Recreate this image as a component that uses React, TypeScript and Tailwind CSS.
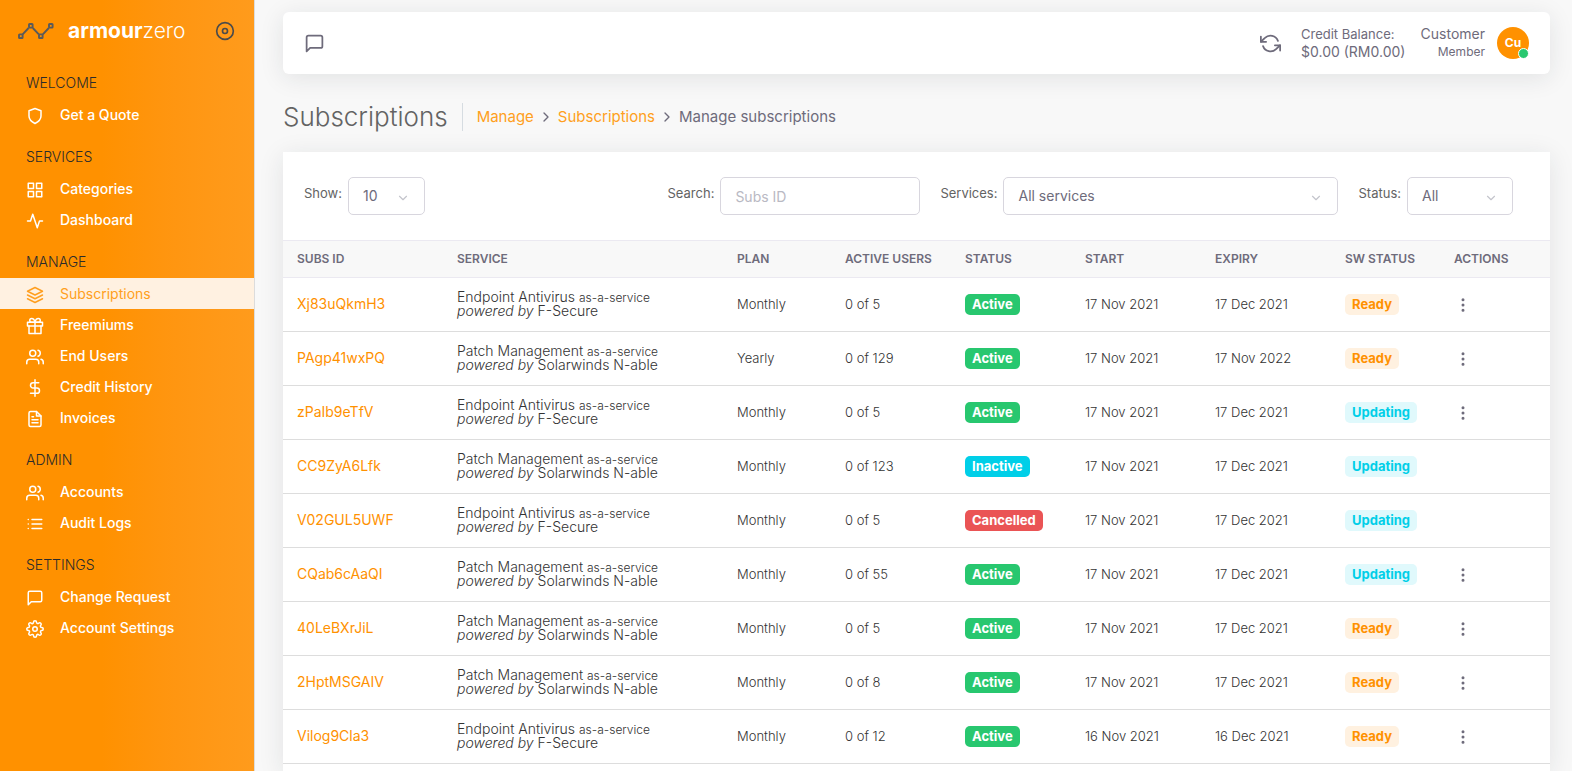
import { useState } from "react";
import type { ReactNode } from "react";
import type { IconType } from "react-icons";
import {
	FiActivity,
	FiChevronDown,
	FiChevronRight,
	FiDisc,
	FiDollarSign,
	FiFileText,
	FiGift,
	FiGrid,
	FiLayers,
	FiList,
	FiMessageSquare,
	FiMoreVertical,
	FiRefreshCcw,
	FiSettings,
	FiShield,
	FiUsers,
} from "react-icons/fi";

interface NavItem {
	label: string;
	icon: IconType;
}

interface NavGroup {
	title: string;
	items: NavItem[];
}

interface Subscription {
	id: string;
	service: string;
	vendor: string;
	plan: string;
	users: string;
	status: string;
	start: string;
	expiry: string;
	swStatus: string;
	hasActions: boolean;
}

const NAV_GROUPS: NavGroup[] = [
	{ title: "WELCOME", items: [{ label: "Get a Quote", icon: FiShield }] },
	{
		title: "SERVICES",
		items: [
			{ label: "Categories", icon: FiGrid },
			{ label: "Dashboard", icon: FiActivity },
		],
	},
	{
		title: "MANAGE",
		items: [
			{ label: "Subscriptions", icon: FiLayers },
			{ label: "Freemiums", icon: FiGift },
			{ label: "End Users", icon: FiUsers },
			{ label: "Credit History", icon: FiDollarSign },
			{ label: "Invoices", icon: FiFileText },
		],
	},
	{
		title: "ADMIN",
		items: [
			{ label: "Accounts", icon: FiUsers },
			{ label: "Audit Logs", icon: FiList },
		],
	},
	{
		title: "SETTINGS",
		items: [
			{ label: "Change Request", icon: FiMessageSquare },
			{ label: "Account Settings", icon: FiSettings },
		],
	},
];

const ENDPOINT = { service: "Endpoint Antivirus", vendor: "F-Secure" };
const PATCH = { service: "Patch Management", vendor: "Solarwinds N-able" };

const SUBSCRIPTIONS: Subscription[] = [
	{ id: "Xj83uQkmH3", ...ENDPOINT, plan: "Monthly", users: "0 of 5", status: "Active", start: "17 Nov 2021", expiry: "17 Dec 2021", swStatus: "Ready", hasActions: true },
	{ id: "PAgp41wxPQ", ...PATCH, plan: "Yearly", users: "0 of 129", status: "Active", start: "17 Nov 2021", expiry: "17 Nov 2022", swStatus: "Ready", hasActions: true },
	{ id: "zPaIb9eTfV", ...ENDPOINT, plan: "Monthly", users: "0 of 5", status: "Active", start: "17 Nov 2021", expiry: "17 Dec 2021", swStatus: "Updating", hasActions: true },
	{ id: "CC9ZyA6Lfk", ...PATCH, plan: "Monthly", users: "0 of 123", status: "Inactive", start: "17 Nov 2021", expiry: "17 Dec 2021", swStatus: "Updating", hasActions: false },
	{ id: "V02GUL5UWF", ...ENDPOINT, plan: "Monthly", users: "0 of 5", status: "Cancelled", start: "17 Nov 2021", expiry: "17 Dec 2021", swStatus: "Updating", hasActions: false },
	{ id: "CQab6cAaQI", ...PATCH, plan: "Monthly", users: "0 of 55", status: "Active", start: "17 Nov 2021", expiry: "17 Dec 2021", swStatus: "Updating", hasActions: true },
	{ id: "40LeBXrJiL", ...PATCH, plan: "Monthly", users: "0 of 5", status: "Active", start: "17 Nov 2021", expiry: "17 Dec 2021", swStatus: "Ready", hasActions: true },
	{ id: "2HptMSGAIV", ...PATCH, plan: "Monthly", users: "0 of 8", status: "Active", start: "17 Nov 2021", expiry: "17 Dec 2021", swStatus: "Ready", hasActions: true },
	{ id: "Vilog9Cla3", ...ENDPOINT, plan: "Monthly", users: "0 of 12", status: "Active", start: "16 Nov 2021", expiry: "16 Dec 2021", swStatus: "Ready", hasActions: true },
];

const COLUMNS = [
	{ label: "SUBS ID", width: "w-[160px]" },
	{ label: "SERVICE", width: "" },
	{ label: "PLAN", width: "w-[108px]" },
	{ label: "ACTIVE USERS", width: "w-[120px]" },
	{ label: "STATUS", width: "w-[120px]" },
	{ label: "START", width: "w-[130px]" },
	{ label: "EXPIRY", width: "w-[130px]" },
	{ label: "SW STATUS", width: "w-[109px]" },
	{ label: "ACTIONS", width: "w-[110px]" },
];

const getBadgeColor = (status: string) => {
	const colors: Record<string, string> = {
		Active: "bg-[#28c76f] text-white",
		Inactive: "bg-[#00cfe8] text-white",
		Cancelled: "bg-[#ea5455] text-white",
		Ready: "bg-[#fff1e0] text-[#ff9100]",
		Updating: "bg-[#e0f9fc] text-[#00cfe8]",
	};
	return colors[status] || "bg-gray-100 text-gray-800";
};

const Badge = ({ status }: { status: string }) => (
	<span className={`inline-flex h-[21px] items-center rounded-[5px] px-[7px] text-[13px] font-bold ${getBadgeColor(status)}`}>
		{status}
	</span>
);

const LogoMark = () => (
	<svg viewBox="0 0 38 18" className="h-[18px] w-[38px]" fill="none" stroke="#5a5a5a" strokeWidth="1.9">
		<path d="M4.6 12.4 10.6 6M14.8 6l6 6.4M24.8 12.4l6-6.4" />
		<rect x="1" y="12.4" width="3.6" height="3.6" rx="0.6" />
		<rect x="11" y="2" width="3.6" height="3.6" rx="0.6" />
		<rect x="21" y="12.4" width="3.6" height="3.6" rx="0.6" />
		<rect x="31" y="2" width="3.6" height="3.6" rx="0.6" />
	</svg>
);

const Sidebar = () => (
	<aside className="w-[255px] flex-shrink-0 border-r border-[#dcdcdc] bg-linear-to-r from-[#ff9100] from-40% to-[#ff9b1c]">
		<div className="flex h-14 items-center pt-1.5 pr-[19px] pl-[18px]">
			<LogoMark />
			<a href="#" className="ml-3 text-[21px] leading-6 text-white">
				<span className="font-bold">armour</span>
				<span className="font-light">zero</span>
			</a>
			<button type="button" aria-label="Toggle menu" className="ml-auto text-[#4b4b4b]">
				<FiDisc className="h-5 w-5" />
			</button>
		</div>
		<nav>
			{NAV_GROUPS.map((group) => (
				<div key={group.title}>
					<h2 className="h-[43px] pt-[18px] pl-[26px] text-sm leading-[18px] font-light text-[#2b2b2b]">{group.title}</h2>
					<ul>
						{group.items.map(({ label, icon: Icon }) => (
							<li key={label}>
								<a
									href="#"
									className={`flex h-[31px] items-center gap-4 pl-[26px] text-sm ${
										label === "Subscriptions" ? "bg-[#fff1e1] text-[#ff9f20]" : "font-medium text-white"
									}`}
								>
									<Icon className="mt-0.5 h-[18px] w-[18px]" />
									{label}
								</a>
							</li>
						))}
					</ul>
				</div>
			))}
		</nav>
	</aside>
);

const Topbar = () => (
	<header className="flex h-[62px] flex-shrink-0 items-center rounded-md bg-white px-[21px] text-[#6e6b7b] shadow-[0_4px_24px_0_rgba(34,41,47,0.1)]">
		<button type="button" aria-label="Messages">
			<FiMessageSquare className="h-[21px] w-[21px]" />
		</button>
		<button type="button" aria-label="Refresh" className="ml-auto">
			<FiRefreshCcw className="h-[21px] w-[21px]" />
		</button>
		<div className="ml-5 min-w-[108px]">
			<p className="text-[13px] leading-[18px]">Credit Balance:</p>
			<p className="text-sm leading-[18px]">$0.00 (RM0.00)</p>
		</div>
		<div className="ml-2.5 min-w-[66px] text-right">
			<p className="text-sm leading-[18px]">Customer</p>
			<p className="text-xs leading-[18px]">Member</p>
		</div>
		<div className="relative ml-3 flex h-8 w-8 items-center justify-center rounded-full bg-[#ff9100] text-xs font-bold text-white">
			Cu
			<span className="absolute right-0 bottom-0 h-[11px] w-[11px] rounded-full border border-white bg-[#28c76f]"></span>
		</div>
	</header>
);

const Breadcrumb = () => (
	<div className="mt-[29px] flex h-7 flex-shrink-0 items-center">
		<h1 className="border-r border-[#d6dce1] pr-3.5 text-[26px] leading-7 font-light text-[#636363]">Subscriptions</h1>
		<nav className="flex items-center gap-1 pl-3.5 text-[15px] text-[#6e6b7b]">
			<a href="#" className="text-[#ff9f20]">Manage</a>
			<FiChevronRight className="h-4 w-4" />
			<a href="#" className="text-[#ff9f20]">Subscriptions</a>
			<FiChevronRight className="h-4 w-4" />
			<span>Manage subscriptions</span>
		</nav>
	</div>
);

interface FieldProps {
	id: string;
	label: string;
	children: ReactNode;
}

const Field = ({ id, label, children }: FieldProps) => (
	<div className="flex items-center gap-1.5">
		<label htmlFor={id} className="pb-1 text-[13px] text-[#636363]">{label}</label>
		{children}
	</div>
);

interface SelectProps {
	id: string;
	options: string[];
	width: string;
}

const Select = ({ id, options, width }: SelectProps) => (
	<div className={`relative ${width}`}>
		<select id={id} className="h-[38px] w-full appearance-none rounded-[5px] border border-[#d8d6de] bg-white pl-3.5 text-sm text-[#6e6b7b]">
			{options.map((o) => (
				<option key={o}>{o}</option>
			))}
		</select>
		<FiChevronDown className="pointer-events-none absolute top-3.5 right-[15px] h-3.5 w-3.5 text-[#c4c5cc]" />
	</div>
);

const SubscriptionTable = () => (
	<table className="w-full table-fixed border-separate border-spacing-0 text-left text-[13px] text-[#333333]">
		<thead>
			<tr className="h-[38px] bg-[#f8f8f8] text-xs text-[#6e6b7b]">
				{COLUMNS.map((c) => (
					<th key={c.label} className={`border-y border-[#ebe9f1] pl-3.5 font-semibold whitespace-nowrap ${c.width}`}>{c.label}</th>
				))}
			</tr>
		</thead>
		<tbody>
			{SUBSCRIPTIONS.map((s) => (
				<tr key={s.id} className="h-[54px] font-light *:border-b *:border-[#dddddd] *:pl-3.5">
					<td><a href="#" className="text-sm font-normal text-[#ff9100]">{s.id}</a></td>
					<td className="pb-0.5 text-sm leading-[14px]">
						<p className="leading-[14px]">
							{s.service} <span className="text-xs leading-[13px]">as-a-service</span>
						</p>
						<p className="leading-[14px]">
							<i>powered by</i> {s.vendor}
						</p>
					</td>
					<td>{s.plan}</td>
					<td>{s.users}</td>
					<td><Badge status={s.status} /></td>
					<td>{s.start}</td>
					<td>{s.expiry}</td>
					<td><Badge status={s.swStatus} /></td>
					<td>
						{s.hasActions && (
							<button type="button" aria-label={`Actions for ${s.id}`} className="block text-[#6e6b7b]">
								<FiMoreVertical className="h-[18px] w-[18px]" />
							</button>
						)}
					</td>
				</tr>
			))}
		</tbody>
	</table>
);

const App = () => {
	const [search, setSearch] = useState("");

	return (
		<div className="flex h-screen overflow-hidden bg-[#f8f8f8] font-['Inter',sans-serif]">
			<Sidebar />
			<main className="flex min-w-0 flex-1 flex-col pt-3 pr-[22px] pl-7">
				<Topbar />
				<Breadcrumb />
				<section className="mt-[21px] min-h-0 flex-1 bg-white shadow-[0_4px_24px_0_rgba(34,41,47,0.1)]">
					<div className="flex h-[88px] items-center gap-5 pr-[37px] pl-[21px]">
						<Field id="show" label="Show:">
							<Select id="show" options={["10", "25", "50"]} width="w-[77px]" />
						</Field>
						<div className="flex-1"></div>
						<Field id="search" label="Search:">
							<input
								id="search"
								type="text"
								value={search}
								onChange={(e) => setSearch(e.target.value)}
								placeholder="Subs ID"
								className="h-[38px] w-[200px] rounded-[5px] border border-[#d8d6de] px-3.5 text-sm text-[#6e6b7b] placeholder:text-[#b9b9c3]"
							/>
						</Field>
						<Field id="services" label="Services:">
							<Select id="services" options={["All services", "Endpoint Antivirus", "Patch Management"]} width="w-[335px]" />
						</Field>
						<Field id="status" label="Status:">
							<Select id="status" options={["All", "Active", "Inactive", "Cancelled"]} width="w-[106px]" />
						</Field>
					</div>
					<SubscriptionTable />
				</section>
			</main>
		</div>
	);
};

export default App;
